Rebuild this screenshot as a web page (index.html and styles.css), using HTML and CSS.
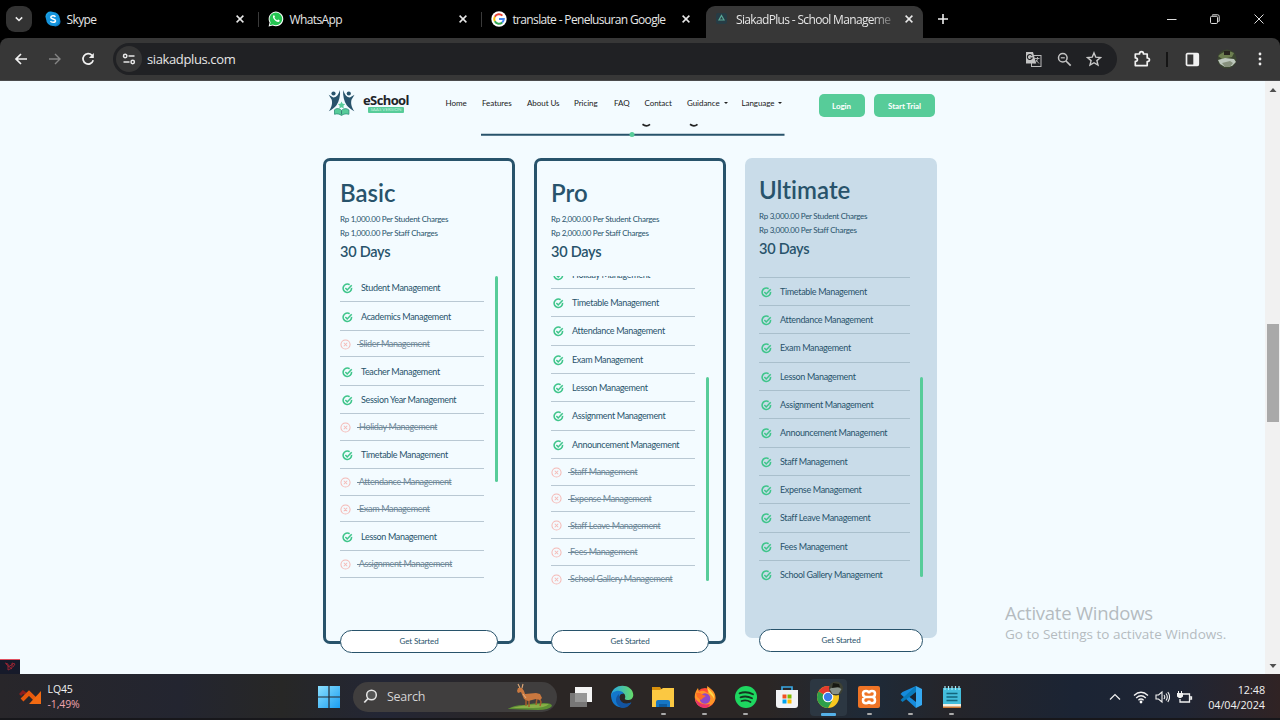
FILE: index.html
```html
<!DOCTYPE html>
<html lang="en">
<head>
<meta charset="utf-8">
<title>SiakadPlus - School Management</title>
<link rel="stylesheet" href="styles.css">
</head>
<body>
<svg class="defs" width="0" height="0">
  <defs>
    <symbol id="ok" viewBox="0 0 12 12"><path d="M10.4 5.3A4.6 4.6 0 1 1 8.3 1.9M3.7 5.5l2 2.1 4.9-5.2" fill="none" stroke="#3fc58b" stroke-width="1.7"/></symbol>
    <symbol id="no" viewBox="0 0 12 12"><circle cx="6" cy="6" r="5" fill="none" stroke="#f5b9b5" stroke-width="1.1"/><path d="M4.1 4.1l3.8 3.8M7.9 4.1L4.1 7.9" stroke="#f5b9b5" stroke-width="1.1"/></symbol>
    <symbol id="close" viewBox="0 0 10 10"><path d="M1.6 1.6l6.8 6.8M8.4 1.6L1.6 8.4" stroke="#e8e8e8" stroke-width="1.5"/></symbol>
  </defs>
</svg>
<div class="screen">
  <div class="tabs">
    <div class="tab-search"><svg width="10" height="10" viewBox="0 0 10 10"><path d="M1.8 3.4L5 6.5l3.2-3.1" fill="none" stroke="#eee" stroke-width="1.6"/></svg></div>
    <div class="tab t1">
      <svg width="16" height="16" viewBox="0 0 16 16"><circle cx="5.500" cy="5.500" r="5" fill="#1ba3e4"/><circle cx="10.500" cy="10.500" r="5" fill="#087bc9"/><circle cx="8" cy="8" r="6.900" fill="#1594dc"/><path d="M10.400 5.800C9.500 4.200 5.800 4.400 5.800 6.200c0 2.200 4.700 1.200 4.700 3.500 0 2-4 2.200-5 .3" fill="none" stroke="#fff" stroke-width="1.500"/></svg>
      <span class="tt">Skype</span><svg class="x" width="10" height="10"><use href="#close"/></svg>
    </div>
    <i class="sep"></i>
    <div class="tab t2">
      <svg width="16" height="16" viewBox="0 0 16 16"><path d="M.6 15.4l1-3.9A7.3 7.3 0 1 1 4.600 14.400z" fill="#fff"/><path d="M1.800 14.200l.8-2.900A6.300 6.300 0 1 1 4.900 13.400z" fill="#25c552"/><path d="M5.300 4.600c.7-.8 1.200-.2 1.600 1.100.1.500-.6.800-.5 1.100.6 1.200 1.500 2 2.700 2.500.4 0 .7-.9 1.100-.8 1.700.8 1.700 1 1.300 1.700-1.700 2.600-8-2.500-6.200-5.600z" fill="#fff"/></svg>
      <span class="tt">WhatsApp</span><svg class="x" width="10" height="10"><use href="#close"/></svg>
    </div>
    <i class="sep"></i>
    <div class="tab t3">
      <svg width="16" height="16" viewBox="0 0 16 16"><circle cx="8" cy="8" r="7.700" fill="#fff"/><g fill="none" stroke-width="2"><path d="M11.400 4.600A4.800 4.800 0 0 0 3.800 5.700" stroke="#ea4335"/><path d="M3.800 5.700a4.800 4.800 0 0 0 0 4.600" stroke="#fbbc05"/><path d="M3.800 10.300a4.800 4.800 0 0 0 7.400 1.200" stroke="#34a853"/><path d="M11.200 11.500A4.800 4.800 0 0 0 12.800 8H8" stroke="#4285f4"/></g></svg>
      <span class="tt">translate - Penelusuran Google</span><svg class="x" width="10" height="10"><use href="#close"/></svg>
    </div>
    <div class="tab t4">
      <svg width="14" height="14" viewBox="0 0 14 14"><rect x="1" y="1" width="11" height="11" rx="2" fill="#263c45"/><path d="M6.500 3.500L9 8H4z" fill="none" stroke="#5aa896" stroke-width="1.200"/></svg>
      <span class="tt fade">SiakadPlus - School Manageme</span><svg class="x" width="10" height="10"><use href="#close"/></svg>
    </div>
    <svg class="plus" width="12" height="12" viewBox="0 0 12 12"><path d="M6 1v10M1 6h10" stroke="#eee" stroke-width="1.600"/></svg>
    <div class="wincontrols">
      <svg width="12" height="12" viewBox="0 0 12 12"><path d="M1 6.500h9.500" stroke="#ddd"/></svg>
      <svg width="12" height="12" viewBox="0 0 12 12"><path d="M3.500 2.500V1.800h5.200q1.500 0 1.500 1.500v5h-1" fill="none" stroke="#ddd"/><rect x="1.500" y="3.300" width="7" height="7.200" rx="1.200" fill="none" stroke="#ddd"/></svg>
      <svg width="12" height="12" viewBox="0 0 12 12"><path d="M1.500 1.500l9 9M10.500 1.500l-9 9" stroke="#ddd"/></svg>
    </div>
  </div>

  <div class="toolbar">
    <svg class="tb back" width="14" height="14" viewBox="0 0 14 14"><path d="M13 7H2M7 2L2 7l5 5" fill="none" stroke="#f1f1f1" stroke-width="1.700"/></svg>
    <svg class="tb fwd" width="14" height="14" viewBox="0 0 14 14"><path d="M1 7h11M7 2l5 5-5 5" fill="none" stroke="#858585" stroke-width="1.400"/></svg>
    <svg class="tb reload" width="14" height="14" viewBox="0 0 14 14"><path d="M12.200 8.300A5.200 5.200 0 1 1 11 3.300" fill="none" stroke="#f1f1f1" stroke-width="1.700"/><path d="M12.800.9v5H7.900z" fill="#f1f1f1"/></svg>
    <div class="omnibox">
      <div class="site"><svg width="14" height="12" viewBox="0 0 14 12"><g fill="none" stroke="#e8e8e8" stroke-width="1.500"><circle cx="3.200" cy="3" r="1.700"/><path d="M6.500 3h6M1.500 9h6"/><circle cx="10.700" cy="9" r="1.700"/></g></svg></div>
      <span class="url">siakadplus.com</span>
      <svg class="o1" width="17" height="17" viewBox="0 0 17 17"><rect x="6.500" y="4.500" width="9.500" height="11" fill="none" stroke="#bbb"/><path d="M1 1h7l3.200 11.500H1z" fill="#c4c4c4"/><path d="M7 4.700A2.500 2.500 0 1 0 7.200 7H5.300" fill="none" stroke="#202124" stroke-width="1.100"/><path d="M9.500 7.500h5M12.500 6v1.500c0 2-2 4-3 4.500M11 9l3 3.500" fill="none" stroke="#bbb" stroke-width=".9"/></svg>
      <svg class="o2" width="15" height="15" viewBox="0 0 15 15"><circle cx="5.800" cy="5.800" r="4.300" fill="none" stroke="#c4c4c4" stroke-width="1.500"/><path d="M9 9l4.700 4.700" stroke="#c4c4c4" stroke-width="1.700"/><path d="M3.800 5.800h4" stroke="#c4c4c4" stroke-width="1.200"/></svg>
      <svg class="o3" width="16" height="16" viewBox="0 0 16 16"><path d="M8 1.900l1.800 4.300 4.600.4-3.500 3 1.100 4.500L8 11.700l-4 2.400 1.100-4.500-3.500-3 4.600-.4z" fill="none" stroke="#c9c9c9" stroke-width="1.400"/></svg>
    </div>
    <svg class="ext" width="18" height="18" viewBox="0 0 18 18"><path d="M2.300 4h4.200c0-3.200 4-3.200 4 0h3.700v4c3 0 3 3.600 0 3.600v4H2.300v-4.200c2.800-.2 2.800-3.300 0-3.500z" fill="none" stroke="#f1f1f1" stroke-width="1.700" stroke-linejoin="round"/></svg>
    <i class="tbsep"></i>
    <svg class="panel" width="15" height="15" viewBox="0 0 15 15"><rect x="1.500" y="1.700" width="11.800" height="11.600" rx="1" fill="none" stroke="#f1f1f1" stroke-width="1.700"/><path d="M8.300 1.500h5v12h-5z" fill="#f1f1f1"/></svg>
    <svg class="avatar" width="20" height="20" viewBox="0 0 20 20"><defs><clipPath id="av"><circle cx="10" cy="10" r="9.500"/></clipPath></defs><g clip-path="url(#av)"><path d="M0 0h20v20H0z" fill="#3b4630"/><path d="M1 7q8-7 16-3l-2 4-10 2z" fill="#6d7f50"/><path d="M7 2h6v4H7z" fill="#28251e"/><path d="M1 11l7-2 9 1 2 3-4 4-7 1-5-3z" fill="#bdc7bd"/><path d="M5 14l8-2 3 2-3 4H8z" fill="#87917d"/></g></svg>
    <svg class="dots" width="4" height="14" viewBox="0 0 4 14"><g fill="#eee"><circle cx="2" cy="2" r="1.400"/><circle cx="2" cy="7" r="1.400"/><circle cx="2" cy="12" r="1.400"/></g></svg>
  </div>

  <div class="viewport">
    <div class="site-page">
      <header class="head">
        <svg class="logo" width="28" height="28" viewBox="0 0 28 28"><g fill="#28536b"><circle cx="5.500" cy="4.500" r="2.100"/><circle cx="20.800" cy="4.500" r="2.100"/><path d="M.7 5.800l4.600 2.700c3.200 0 5.300-3 6.700-7.500.5 6-.8 11-3.500 15.300C6.500 18.500 4 21 .8 22.300 4 18 4.500 14 3.700 10.800z"/><path d="M26.500 5.800l-4.600 2.700c-3.200 0-5.300-3-6.700-7.500-.5 6 .8 11 3.500 15.300 2 2.200 4.500 4.700 7.700 6-3.200-4.300-3.700-8.300-2.900-11.500z"/></g><path d="M13.500 12.400l1.200 2.300 2.500.4-1.800 1.700.4 2.600-2.300-1.200-2.200 1.200.4-2.600-1.800-1.700 2.500-.4z" fill="#57cc99"/><path d="M6.500 20.800c3-2.400 5.500-.9 7 .6 2-2 5-2.500 7.400-.4v4.300c-3-.8-5.200-.5-7.400 1.200-2-1.700-4.500-2-7-1.200z" fill="#57cc99" stroke="#2f8f78" stroke-width=".8"/><path d="M13.500 21.500v4" stroke="#2f6f70" stroke-width=".8"/></svg>
        <div class="brand"><b>eSchool</b><span>SAAS VERSION</span></div>
        <nav class="nav">
          <a>Home</a><a>Features</a><a>About Us</a><a>Pricing</a><a>FAQ</a><a>Contact</a><a>Guidance<i></i></a><a>Language<i></i></a>
        </nav>
        <a class="btn login">Login</a><a class="btn trial">Start Trial</a>
      </header>
      <div class="rule">
        <svg width="304" height="16" viewBox="0 0 304 16"><path d="M161.500 2.300q4 3 7.500 0M209 2.300q4 3 7.500 0" fill="none" stroke="#222" stroke-width="1.700"/><path d="M0 12.800h303.500" stroke="#28536b" stroke-width="2"/><circle cx="151" cy="12.500" r="2.500" fill="#57cc99"/></svg>
      </div>
      <main class="cards">
        <section class="card">
          <h2>Basic</h2><p>Rp 1,000.00 Per Student Charges</p><p>Rp 1,000.00 Per Staff Charges</p><h3>30 Days</h3>
          <div class="scroller"><ul class="from-top">
            <li><svg><use href="#ok"/></svg><span>Student Management</span></li>
            <li><svg><use href="#ok"/></svg><span>Academics Management</span></li>
            <li class="off"><svg><use href="#no"/></svg><s>&nbsp;Slider Management</s></li>
            <li><svg><use href="#ok"/></svg><span>Teacher Management</span></li>
            <li><svg><use href="#ok"/></svg><span>Session Year Management</span></li>
            <li class="off"><svg><use href="#no"/></svg><s>&nbsp;Holiday Management</s></li>
            <li><svg><use href="#ok"/></svg><span>Timetable Management</span></li>
            <li class="off"><svg><use href="#no"/></svg><s>&nbsp;Attendance Management</s></li>
            <li class="off"><svg><use href="#no"/></svg><s>&nbsp;Exam Management</s></li>
            <li><svg><use href="#ok"/></svg><span>Lesson Management</span></li>
            <li class="off"><svg><use href="#no"/></svg><s>&nbsp;Assignment Management</s></li>
          </ul><i class="bar bar-top"></i></div>
          <a class="go">Get Started</a>
        </section>
        <section class="card">
          <h2>Pro</h2><p>Rp 2,000.00 Per Student Charges</p><p>Rp 2,000.00 Per Staff Charges</p><h3>30 Days</h3>
          <div class="scroller"><ul class="from-mid">
            <li><svg><use href="#ok"/></svg><span>Holiday Management</span></li>
            <li><svg><use href="#ok"/></svg><span>Timetable Management</span></li>
            <li><svg><use href="#ok"/></svg><span>Attendance Management</span></li>
            <li><svg><use href="#ok"/></svg><span>Exam Management</span></li>
            <li><svg><use href="#ok"/></svg><span>Lesson Management</span></li>
            <li><svg><use href="#ok"/></svg><span>Assignment Management</span></li>
            <li><svg><use href="#ok"/></svg><span>Announcement Management</span></li>
            <li class="off"><svg><use href="#no"/></svg><s>&nbsp;Staff Management</s></li>
            <li class="off"><svg><use href="#no"/></svg><s>&nbsp;Expense Management</s></li>
            <li class="off"><svg><use href="#no"/></svg><s>&nbsp;Staff Leave Management</s></li>
            <li class="off"><svg><use href="#no"/></svg><s>&nbsp;Fees Management</s></li>
            <li class="off last"><svg><use href="#no"/></svg><s>&nbsp;School Gallery Management</s></li>
          </ul><i class="bar bar-end"></i></div>
          <a class="go">Get Started</a>
        </section>
        <section class="card featured">
          <h2>Ultimate</h2><p>Rp 3,000.00 Per Student Charges</p><p>Rp 3,000.00 Per Staff Charges</p><h3>30 Days</h3>
          <div class="scroller"><ul class="from-line">
            <li><svg><use href="#ok"/></svg><span>Timetable Management</span></li>
            <li><svg><use href="#ok"/></svg><span>Attendance Management</span></li>
            <li><svg><use href="#ok"/></svg><span>Exam Management</span></li>
            <li><svg><use href="#ok"/></svg><span>Lesson Management</span></li>
            <li><svg><use href="#ok"/></svg><span>Assignment Management</span></li>
            <li><svg><use href="#ok"/></svg><span>Announcement Management</span></li>
            <li><svg><use href="#ok"/></svg><span>Staff Management</span></li>
            <li><svg><use href="#ok"/></svg><span>Expense Management</span></li>
            <li><svg><use href="#ok"/></svg><span>Staff Leave Management</span></li>
            <li><svg><use href="#ok"/></svg><span>Fees Management</span></li>
            <li class="last"><svg><use href="#ok"/></svg><span>School Gallery Management</span></li>
          </ul><i class="bar bar-end"></i></div>
          <a class="go">Get Started</a>
        </section>
      </main>
      <div class="watermark"><div class="w1">Activate Windows</div><div class="w2">Go to Settings to activate Windows.</div></div>
      <div class="debug"><svg width="14" height="12" viewBox="0 0 14 12"><path d="M2 2l3 1v6l4-2V2l3 1-2 3M3 3l6 5M5 6l5-3" fill="none" stroke="#a02633" stroke-width=".9"/></svg></div>
    </div>
    <div class="scrollbar"><svg width="8" height="6" viewBox="0 0 8 6"><path d="M4 1l3.500 4h-7z" fill="#505050"/></svg><i></i><svg width="8" height="6" viewBox="0 0 8 6"><path d="M4 5L.5 1h7z" fill="#505050"/></svg></div>
  </div>

  <div class="taskbar">
    <svg class="stock" width="24" height="18" viewBox="0 0 24 18"><path d="M1 7l3-3 3 2" fill="none" stroke="#8b1e1e" stroke-width="3"/><path d="M3 12l7-7 8 8" fill="none" stroke="#e8590c" stroke-width="4"/><path d="M22 3v13H10z" fill="#f26a12"/></svg>
    <div class="quote"><div>LQ45</div><div class="neg">-1,49%</div></div>
    <svg class="start" width="22" height="22" viewBox="0 0 22 22"><defs><linearGradient id="w" x1="0" y1="0" x2="1" y2="1"><stop stop-color="#8be0ff"/><stop offset="1" stop-color="#1a9df2"/></linearGradient></defs><path d="M0 0h10.400v10.400H0zM11.600 0H22v10.400H11.600zM0 11.600h10.400V22H0zM11.600 11.600H22V22H11.600z" fill="url(#w)"/></svg>
    <div class="search">
      <svg width="15" height="15" viewBox="0 0 15 15"><circle cx="8.500" cy="6" r="4.800" fill="#555" stroke="#e5e5e5" stroke-width="1.500"/><path d="M5 9.500L1.300 13.500" stroke="#e5e5e5" stroke-width="1.800"/></svg>
      <span>Search</span>
      <svg class="deer" width="46" height="28" viewBox="0 0 46 28"><path d="M1 26q6-4 16-4 9-2 20-2 8 0 8 3-3 4-14 4z" fill="#5d9134"/><path d="M4 25q16-4 38-4-4 4-16 4z" fill="#8bae48"/><path d="M19 16v7M22 17v7M32 14l2 5-1 4M30 15l-1 7" fill="none" stroke="#a75c2c" stroke-width="1.500"/><path d="M10 8l1-3 4 0 2 3 1 3 11-1 4 1 2 4-2 2-4-1-8 2-4-2-3-7-3 1z" fill="#c9783f"/><path d="M13 5L11 1M15 5l1-4M16 11l3 4" stroke="#e0aa7a" stroke-width="1.100"/></svg>
    </div>
    <div class="apps">
      <div class="app"><svg width="24" height="24" viewBox="0 0 24 24"><path d="M6 2h17v15H6z" fill="#f4f4f4"/><path d="M1 8h17v14H1z" fill="#858585" fill-opacity=".85"/></svg></div>
      <div class="app"><svg width="24" height="24" viewBox="0 0 24 24"><defs><linearGradient id="e" x1="0" y1="0" x2="1" y2="0"><stop stop-color="#27a6e5"/><stop offset="1" stop-color="#66db69"/></linearGradient></defs><path d="M1 11C2-3 23-2 23.300 10c-.2 6-7 5.500-8.500 4 2-5-3-8-7-6-3 1.500-6 4-6.800 3z" fill="url(#e)"/><path d="M1 11c0-5 10-8 13-2-4-1-6 3-3.500 7 3 4 7 3 10.500 1.500C17 25 2 25 1 11z" fill="#1377cc"/><path d="M9 9c-6 5-2 13 4 14 4 0 7-3 8.500-5.500C14 21 8 16 9 9z" fill="#1354a1"/></svg></div>
      <div class="app on"><svg width="24" height="24" viewBox="0 0 24 24"><path d="M1 2h8l2 3H1z" fill="#d8900c"/><path d="M1 5h8l3-2h11v19H1z" fill="#fbc842"/><path d="M5 22v-5q0-2 2-2h10q2 0 2 2v5z" fill="#1676c4"/><path d="M8 19h8v3H8z" fill="#0d5b9e"/></svg></div>
      <div class="app on"><svg width="24" height="24" viewBox="0 0 24 24"><circle cx="12" cy="13" r="10" fill="#ff4a37"/><path d="M2 14C1 9 3 6 5 3l1 4c4-3 7 0 9 1L14 1c6 4 9 7 8.500 13-3 10-18 12-20.500 0z" fill="#ff9427"/><path d="M2 13q5 8 15 6-1 4-6 4-8-1-9-10z" fill="#e8336c"/><circle cx="12" cy="13.500" r="5.300" fill="#9148c7"/><path d="M3 8q4-1 7 2l3 1-3 2-2 2-4-3z" fill="#ff6c26"/><path d="M14 2c3 4 8 7 7 12-1-3-3-4-5-6z" fill="#ffd849"/></svg></div>
      <div class="app on"><svg width="24" height="24" viewBox="0 0 24 24"><circle cx="12" cy="12" r="11" fill="#1ed760"/><path d="M5.500 8.300q7-2.500 13.500 1M6.500 12.300q6-2 11.500 1M7.500 16q5-1.500 9 1" fill="none" stroke="#153520" stroke-width="1.800" stroke-linecap="round"/></svg></div>
      <div class="app"><svg width="24" height="24" viewBox="0 0 24 24"><path d="M7 6V2h10v4" fill="none" stroke="#39a7e1" stroke-width="1.700"/><path d="M1 5h22v15q0 3-3 3H4q-3 0-3-3z" fill="#f2f3f5"/><path d="M7.500 9.500h4v4h-4z" fill="#f25022"/><path d="M12.500 9.500h4v4h-4z" fill="#7fba00"/><path d="M7.500 14.500h4v4h-4z" fill="#00a4ef"/><path d="M12.500 14.500h4v4h-4z" fill="#ffb900"/></svg></div>
      <div class="app active"><svg width="28" height="28" viewBox="0 0 28 28"><circle cx="13" cy="16" r="11" fill="#f9c81f"/><path d="M13 16L3.500 10.500A11 11 0 0 1 22.500 10.500z" fill="#e33b2e"/><path d="M13 16L3.500 10.500A11 11 0 0 0 13 27l4-7z" fill="#2d9f4a"/><circle cx="13" cy="16" r="5.300" fill="#fff"/><circle cx="13" cy="16" r="4.200" fill="#3b7ded"/><circle cx="21" cy="7.500" r="7" fill="#3c4034"/><path d="M14.500 8l6-3 6 3-3 5h-6z" fill="#89928a"/><path d="M18 2l6 1 1 3-8 1z" fill="#171812"/></svg></div>
      <div class="app on"><svg width="24" height="24" viewBox="0 0 24 24"><rect x="1" y="1" width="22" height="22" rx="2" fill="#ee7325"/><path d="M9 12h6M12 8.500C12 5 6 5 6 8.500c0 2 1 3.500 3 3.500-2 0-3 1.500-3 3.500C6 19 12 19 12 15.500 12 19 18 19 18 15.500c0-2-1-3.500-3-3.500 2 0 3-1.500 3-3.500C18 5 12 5 12 8.500z" fill="none" stroke="#fff" stroke-width="2.500"/></svg></div>
      <div class="app on"><svg width="24" height="24" viewBox="0 0 24 24"><path d="M17 1v22L1.500 9l2-2z" fill="#168bdc"/><path d="M17 1L1.500 15l2 2L17 7z" fill="#087abb"/><path d="M17 1l6 3v16l-6 3z" fill="#35a9f2"/><path d="M17 7v10l-6.500-5z" fill="#172331"/></svg></div>
      <div class="app on"><svg width="24" height="24" viewBox="0 0 24 24"><path d="M3 3h18v19H3z" fill="#43bddb"/><path d="M3 19h18v3H3z" fill="#f5eee0"/><path d="M3 21.500h18V23H3z" fill="#cb7935"/><path d="M5 1v4M8.500 1v4M12 1v4M15.500 1v4M19 1v4" stroke="#a8eaf5" stroke-width="1.200"/><path d="M6.500 8.500h11M6.500 12h11M6.500 15.500h11" stroke="#12667d" stroke-width="1.400"/></svg></div>
    </div>
    <div class="tray">
      <svg width="12" height="10" viewBox="0 0 12 10"><path d="M1 7.500L6 2.500l5 5" fill="none" stroke="#f1f1f1" stroke-width="1.200"/></svg>
      <svg width="16" height="14" viewBox="0 0 16 14"><g fill="none" stroke="#f1f1f1" stroke-width="1.300"><path d="M1 5.500q7-6.500 14 0M3.200 8q4.800-4.500 9.600 0M5.400 10.300q2.600-2.600 5.200 0"/></g><circle cx="8" cy="12" r="1.400" fill="#fff"/></svg>
      <svg width="15" height="14" viewBox="0 0 15 14"><path d="M1 5h2.500L7 2v10L3.500 9H1zM9 5q1.500 2 0 4M11 3.500q2.600 3.500 0 7M12.800 2q3.500 5 0 10" fill="none" stroke="#f1f1f1" stroke-width="1.100"/></svg>
      <svg width="17" height="14" viewBox="0 0 17 14"><path d="M7 4h6.500v8H4V9M14 7h1.500v2H14" fill="none" stroke="#f1f1f1" stroke-width="1.300"/><path d="M1 3h6v3.500L5 8H3L1 6.500zM2 1h1v2H2zM5 1h1v2H5z" fill="#f1f1f1"/></svg>
      <div class="clock"><div>12:48</div><div class="date">04/04/2024</div></div>
    </div>
  </div>
</div>
</body>
</html>
```
FILE: styles.css
```css
* { box-sizing: border-box; }
body { margin: 0; overflow: hidden; font-family: "Open Sans", "Noto Sans", sans-serif; }
svg { display: block; flex: none; }
.defs { position: absolute; }
.screen { width: 1280px; height: 720px; display: grid; grid-template-rows: 38px 43px 593px 46px; background: #000; }

/* tab strip */
.tabs { display: flex; align-items: center; background: #000; color: #e6e6e6; font-size: 12px; }
.tab-search { width: 26px; height: 26px; margin-left: 6px; border-radius: 9px; background: #333; display: grid; place-items: center; }
.tab { display: flex; align-items: center; height: 32px; }
.tab .tt { margin-left: 6px; flex: 1; white-space: nowrap; line-height: 18px; letter-spacing: -.6px; padding-top: 1px; }
.t1 { width: 200px; margin-left: 12.500px; }
.t2 { width: 200px; margin-left: 9px; }
.t3 { width: 200px; margin-left: 9px; }
.sep { width: 1px; height: 15px; margin-left: 13px; background: #3a3a3a; }
.t3 .tt, .t4 .tt { letter-spacing: -.66px; }
.t4 { width: 217px; height: 32px; align-self: flex-end; margin-left: 15.500px; padding: 0 9px 6px 9px; background: #373737; border-radius: 9px 9px 0 0; }
.t4 .tt { margin-left: 7px; margin-right: 12px; }
.fade { -webkit-mask-image: linear-gradient(90deg, #000 87%, rgba(0,0,0,.25)); }
.plus { margin-left: 13.500px; }
.wincontrols { margin-left: auto; display: flex; gap: 31.500px; padding-right: 15.500px; }

/* toolbar */
.toolbar { display: flex; align-items: center; background: #373737; border-radius: 8px 8px 0 0; border-bottom: 1px solid #4a4a4c; }
.back { margin-left: 14px; }
.fwd { margin-left: 20px; }
.reload { margin-left: 19px; }
.omnibox { width: 1004px; height: 32px; margin-left: 18px; padding-left: 3px; border-radius: 16px; background: #202124; display: flex; align-items: center; }
.site { width: 26px; height: 26px; border-radius: 13px; background: #363636; display: grid; place-items: center; }
.url { margin-left: 5px; color: #e6e6e6; font-size: 13px; letter-spacing: -.38px; }
.o1 { margin-left: auto; }
.o2 { margin-left: 15px; }
.o3 { margin-left: 14px; margin-right: 15px; }
.ext { margin-left: 16px; }
.tbsep { width: 2px; height: 15px; margin-left: 15px; background: #151515; }
.panel { margin-left: 17px; }
.avatar { margin-left: 17px; }
.dots { margin-left: 20.500px; }

/* page */
.viewport { display: flex; overflow: hidden; background: #f3fbff; }
.site-page { width: 1265px; position: relative; font-family: Lato, "Open Sans", sans-serif; color: #28536b; font-variant-ligatures: none; }
.head { display: flex; height: 43px; padding-left: 328px; }
.logo { margin-top: 8px; }
.brand { width: 48px; margin-left: 7px; padding-top: 9px; }
.brand b { display: block; color: #1e2428; font: 700 13px/20px "Open Sans", sans-serif; letter-spacing: -.6px; }
.brand span { display: block; width: 36px; height: 6px; margin: -3px 0 0 5px; border-radius: 1px; background: #57cc99; color: #c5f1de; font-size: 4.500px; line-height: 6px; text-align: center; white-space: nowrap; }
.nav { display: grid; grid-template-columns: 36.500px 45px 47px 40px 30.500px 42.500px 54.500px 77px; margin-left: 34.500px; padding-top: 17px; color: #191919; font-size: 8px; line-height: 11px; letter-spacing: -.06px; white-space: nowrap; }
.nav i { display: inline-block; margin-left: 4px; border: 2px solid transparent; border-top-color: #222; border-bottom: 0; vertical-align: 2px; }
.btn { height: 23px; margin-top: 13px; border-radius: 5px; background: #57cc99; color: #fff; font-size: 8px; font-weight: 700; line-height: 24px; letter-spacing: -.1px; text-align: center; }
.login { width: 46px; }
.trial { width: 61px; margin-left: 9.500px; }
.rule { height: 34px; padding: 0 0 0 480.500px; margin-top: -2.500px; }
.cards { display: grid; grid-template-columns: 192px 192px 192px; gap: 19px; margin: 2.500px 0 0 323px; }
.card { height: 486px; border: 3px solid #28536b; border-radius: 7px; padding: 17px 14px 0; display: flex; flex-direction: column; }
.card h2 { margin: 0; font-size: 24px; line-height: 30px; font-weight: 600; }
.card p { margin: 0; font-size: 8px; line-height: 14px; letter-spacing: -.27px; white-space: nowrap; }
.card h2 + p { margin-top: 3.500px; }
.card h3 { margin: 2px 0 0; font-size: 14.500px; line-height: 20px; font-weight: 600; letter-spacing: -.25px; }
.scroller { height: 309px; margin-top: 14.500px; overflow: hidden; display: flex; justify-content: space-between; flex: none; }
.scroller ul { list-style: none; margin: 0; padding: 0; width: 144px; }
.scroller li { height: 28.350px; padding: 0 0 0 2px; border-bottom: 1px solid #b9c8d3; display: flex; align-items: center; font-size: 9px; letter-spacing: -.33px; white-space: nowrap; }
.scroller li svg { width: 11px; height: 11px; margin-top: 2px; }
.scroller li span { margin-left: 8px; }
.scroller li.off { height: 26.700px; padding-left: 0; color: #6f8898; }
.scroller li.off s { margin-left: 6px; }
.scroller li.off svg { margin-top: 1px; }
.scroller li.last { border-bottom-color: transparent; }
.scroller .from-top { margin-top: -2px; }
.scroller .from-mid { margin-top: -15.500px; }
.bar { width: 3px; border-radius: 2px; background: #57cc99; }
.bar-top { height: 206px; }
.bar-end { height: 204px; margin-top: 101px; }
.go { height: 23px; margin-top: 45px; border: 1px solid #28536b; border-radius: 12px; background: #fff; font-size: 8px; line-height: 21px; letter-spacing: -.12px; text-align: center; flex: none; }
.featured { height: 480px; border: 0; background: #c9dce9; padding: 17px 14px 0; }
.featured .scroller { margin-top: 17px; }
.featured .scroller ul { width: 150.500px; }
.featured .scroller li { border-bottom-color: #a9bfcc; }
.featured .scroller li.last { border-bottom-color: transparent; }
.scroller .from-line { border-top: 1px solid #a9bfcc; margin-top: 1px; }
.featured .bar-end { height: 200px; }
.featured .go { margin-top: 44px; }
.watermark { position: absolute; left: 1005px; top: 520px; font-family: "Open Sans", sans-serif; color: #b5bbbf; white-space: nowrap; }
.w1 { font-size: 18.500px; line-height: 24px; letter-spacing: -.25px; }
.w2 { font-size: 13.500px; line-height: 19px; }
.debug { position: absolute; left: 0; top: 578px; width: 20px; height: 15px; background: #161a2a; border-top: 1px solid #e05060; padding: 1px 3px; }
.scrollbar { width: 15px; background: #f1f1f1; display: flex; flex-direction: column; align-items: center; padding: 6px 0 5px; }
.scrollbar i { width: 12px; height: 98px; margin-top: 231px; margin-bottom: auto; background: #a9a9a9; }

/* taskbar */
.taskbar { display: flex; align-items: center; background: linear-gradient(90deg, #28262a, #232530 14%, #272726 22%, #232635 30%, #2b2625 40%, #2b2625 60%, #1e2a38 68%, #25252a 74%, #1b2434 84%, #1f2534 92%, #302324); border-bottom: 2px solid #17171b; padding-top: 1px; color: #f1f1f1; }
.stock { margin-left: 19px; }
.quote { width: 64px; margin-left: 4.500px; font-size: 10.500px; line-height: 15px; letter-spacing: -.1px; }
.neg { color: #f0a4ac; }
.start { margin-left: 206.500px; }
.search { width: 204px; height: 30px; margin-left: 13px; padding-left: 10px; border-radius: 15px; background: #403e3e; display: flex; align-items: center; font-size: 12.500px; letter-spacing: -.25px; color: #d4d4d4; }
.search span { margin-left: 9px; }
.deer { margin-left: auto; margin-right: 4px; }
.apps { display: grid; grid-template-columns: repeat(10, 41.200px); margin-left: 3.500px; height: 44px; }
.app { position: relative; display: grid; place-items: center; height: 44px; }
.on::after, .active::after { content: ""; position: absolute; left: 18px; top: 38px; width: 5px; height: 2px; border-radius: 1px; background: #aaa; }
.active::before { content: ""; position: absolute; left: 2px; top: 4px; width: 37px; height: 37px; border-radius: 4px; background: #2c3742; }
.active svg { position: relative; top: -2px; left: 1px; }
.active::after { left: 13px; width: 15px; height: 3px; background: #55b1e8; }
.tray { margin-left: auto; padding-right: 15px; display: flex; align-items: center; }
.tray svg + svg { margin-left: 6px; }
.tray svg:first-child + svg { margin-left: 12px; }
.clock { width: 62px; margin-left: 10px; font-size: 10.800px; line-height: 15px; letter-spacing: -.05px; text-align: right; white-space: nowrap; }
```
